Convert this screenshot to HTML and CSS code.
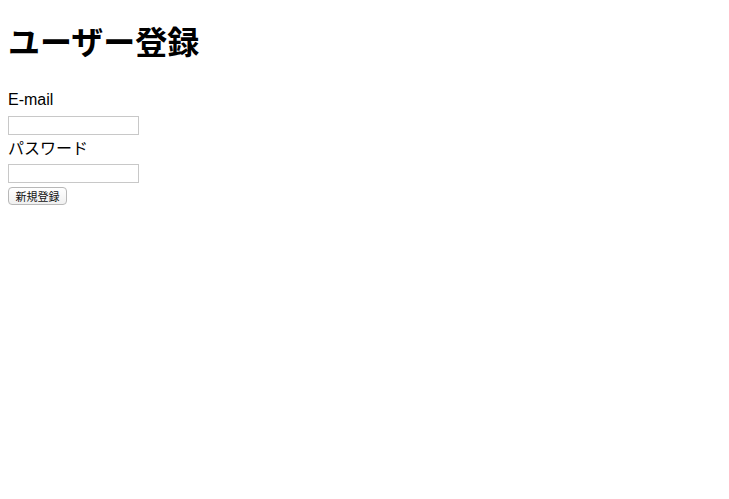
FILE: index.html
```html
<!DOCTYPE html>
<html lang="ja">
<head>
<meta charset="utf-8">
<title>ユーザー登録</title>
<link rel="stylesheet" href="styles.css">
</head>
<body>
<h1 class="title">ユーザー登録</h1>
<form class="form">
  <label class="label" for="email">E-mail</label>
  <input class="field" id="email" type="text">
  <label class="label label-pw" for="pw">パスワード</label>
  <input class="field" id="pw" type="password">
  <button class="submit" type="button">新規登録</button>
</form>
</body>
</html>
```
FILE: styles.css
```css
html, body {
  margin: 0;
  background: #fff;
}
body {
  padding: 0 8px;
  font-family: "Liberation Sans", "Noto Sans CJK JP", sans-serif;
  color: #000;
}
.title {
  margin: 22px 0 0;
  font-size: 32px;
  line-height: 37px;
  font-weight: bold;
  font-family: "Noto Sans CJK JP", sans-serif;
}
.form {
  display: flex;
  flex-direction: column;
  align-items: flex-start;
  margin-top: 31px;
}
.label {
  font-size: 16px;
  line-height: 20px;
  height: 20px;
}
.label-pw {
  font-family: "Noto Sans CJK JP", sans-serif;
  margin-top: 2px;
}
.field {
  box-sizing: border-box;
  width: 131px;
  height: 19px;
  margin: 6px 0 0;
  padding: 0 2px;
  border: 1px solid #c8c8c8;
  background: #fff;
  font: 13px "Liberation Sans", sans-serif;
}
.label-pw + .field {
  margin-top: 7px;
}
.submit {
  box-sizing: border-box;
  margin-top: 4px;
  height: 18px;
  width: 59px;
  padding: 0;
  border: 1px solid #b8b8b8;
  border-radius: 4px;
  background: linear-gradient(#ffffff, #f0f0f0);
  font: 11px "Noto Sans CJK JP", sans-serif;
  line-height: 16px;
  color: #111;
}
```
